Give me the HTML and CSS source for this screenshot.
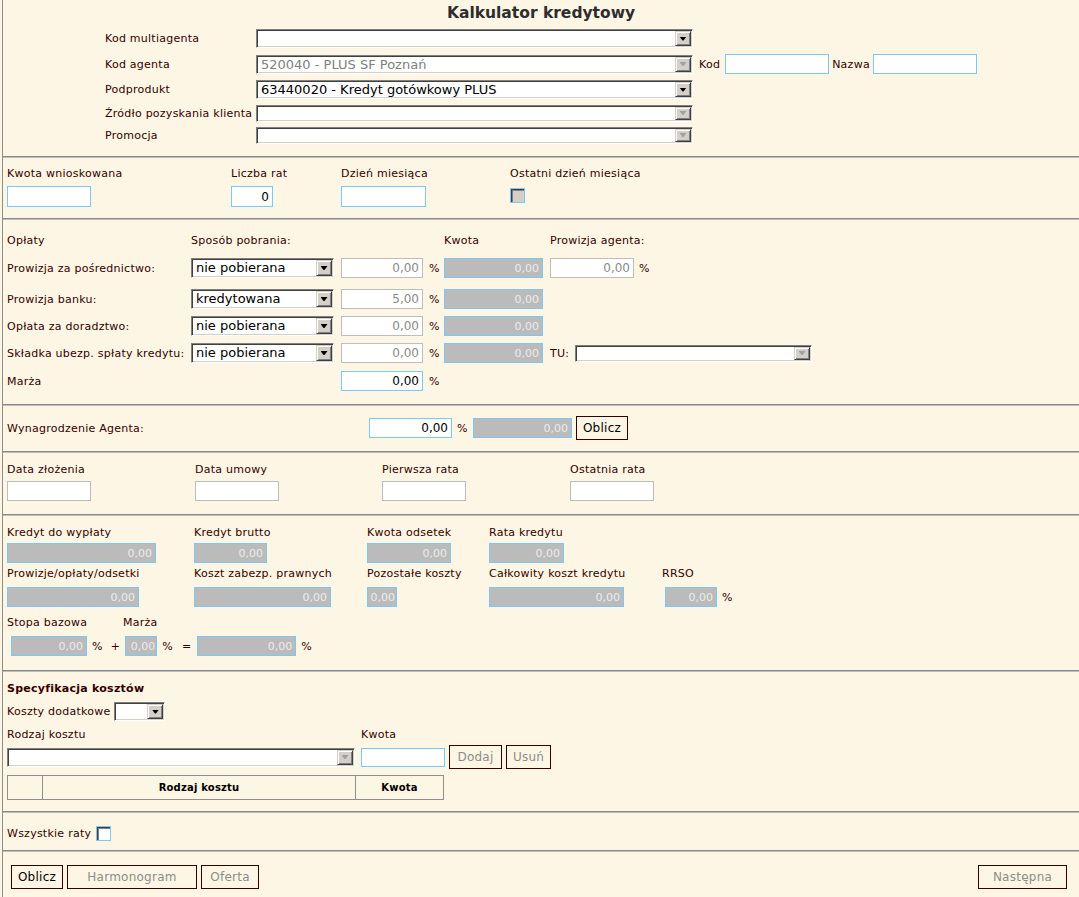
FILE: index.html
```html
<!DOCTYPE html>
<html lang="pl">
<head>
<meta charset="utf-8">
<title>Kalkulator kredytowy</title>
<link rel="stylesheet" href="styles.css">
</head>
<body>
<div class="page">

  <section class="sec sec-top">
    <h1 class="title">Kalkulator kredytowy</h1>
    <div class="trow h25">
      <span class="tlabel">Kod multiagenta</span>
      <div class="sel w437"><span class="sel-txt"></span><span class="sel-btn"></span></div>
    </div>
    <div class="trow h26">
      <span class="tlabel">Kod agenta</span>
      <div class="sel w437 off"><span class="sel-txt">520040 - PLUS SF Poznań</span><span class="sel-btn"></span></div>
      <span class="mini-label kod">Kod</span>
      <input class="in w104" type="text">
      <span class="mini-label nazwa">Nazwa</span>
      <input class="in w104" type="text">
    </div>
    <div class="trow h25">
      <span class="tlabel">Podprodukt</span>
      <div class="sel w437"><span class="sel-txt">63440020 - Kredyt gotówkowy PLUS</span><span class="sel-btn"></span></div>
    </div>
    <div class="trow h22">
      <span class="tlabel">Źródło pozyskania klienta</span>
      <div class="sel w437 small off"><span class="sel-txt"></span><span class="sel-btn"></span></div>
    </div>
    <div class="trow h22">
      <span class="tlabel">Promocja</span>
      <div class="sel w437 small off"><span class="sel-txt"></span><span class="sel-btn"></span></div>
    </div>
  </section>
  <div class="sep"></div>

  <section class="sec sec-kwota">
    <div class="grid4">
      <span class="lbl">Kwota wnioskowana</span>
      <span class="lbl">Liczba rat</span>
      <span class="lbl">Dzień miesiąca</span>
      <span class="lbl">Ostatni dzień miesiąca</span>
      <input class="in h21 w84" type="text">
      <input class="in h21 w42" type="text" value="0">
      <input class="in h21 w85" type="text">
      <span class="chk gray-chk"></span>
    </div>
  </section>
  <div class="sep"></div>

  <section class="sec sec-oplaty">
    <div class="orow head">
      <span class="c-label">Opłaty</span>
      <span class="c-sel">Sposób pobrania:</span>
      <span class="c-pct"></span>
      <span class="c-kw">Kwota</span>
      <span>Prowizja agenta:</span>
    </div>
    <div class="orow mt11">
      <span class="c-label">Prowizja za pośrednictwo:</span>
      <span class="c-sel"><div class="sel w143 h20"><span class="sel-txt">nie pobierana</span><span class="sel-btn"></span></div></span>
      <input class="in dis w82" type="text" value="0,00" readonly>
      <span class="pct">%</span>
      <span class="c-kw"><input class="in gray w99" type="text" value="0,00" readonly></span>
      <input class="in dis w84" type="text" value="0,00" readonly>
      <span class="pct2">%</span>
    </div>
    <div class="orow mt11">
      <span class="c-label">Prowizja banku:</span>
      <span class="c-sel"><div class="sel w143 h20"><span class="sel-txt">kredytowana</span><span class="sel-btn"></span></div></span>
      <input class="in dis w82" type="text" value="5,00" readonly>
      <span class="pct">%</span>
      <span class="c-kw"><input class="in gray w99" type="text" value="0,00" readonly></span>
    </div>
    <div class="orow mt7">
      <span class="c-label">Opłata za doradztwo:</span>
      <span class="c-sel"><div class="sel w143 h20"><span class="sel-txt">nie pobierana</span><span class="sel-btn"></span></div></span>
      <input class="in dis w82" type="text" value="0,00" readonly>
      <span class="pct">%</span>
      <span class="c-kw"><input class="in gray w99" type="text" value="0,00" readonly></span>
    </div>
    <div class="orow mt7">
      <span class="c-label">Składka ubezp. spłaty kredytu:</span>
      <span class="c-sel"><div class="sel w143 h20"><span class="sel-txt">nie pobierana</span><span class="sel-btn"></span></div></span>
      <input class="in dis w82" type="text" value="0,00" readonly>
      <span class="pct">%</span>
      <span class="c-kw"><input class="in gray w99" type="text" value="0,00" readonly></span>
      <span class="tu">TU:</span>
      <div class="sel w237 small off"><span class="sel-txt"></span><span class="sel-btn"></span></div>
    </div>
    <div class="orow mt8">
      <span class="c-label">Marża</span>
      <span class="c-sel"></span>
      <input class="in w82" type="text" value="0,00">
      <span class="pct">%</span>
    </div>
  </section>
  <div class="sep"></div>

  <section class="sec sec-wyn">
    <div class="wrow">
      <span class="w-label">Wynagrodzenie Agenta:</span>
      <input class="in w83" type="text" value="0,00">
      <span class="pct w-pct">%</span>
      <input class="in gray w99" type="text" value="0,00" readonly>
      <button class="btn b-oblicz2" type="button">Oblicz</button>
    </div>
  </section>
  <div class="sep"></div>

  <section class="sec sec-daty">
    <div class="dgrid">
      <span class="lbl">Data złożenia</span>
      <span class="lbl">Data umowy</span>
      <span class="lbl">Pierwsza rata</span>
      <span class="lbl">Ostatnia rata</span>
      <input class="in dis w84" type="text" readonly>
      <input class="in dis w84" type="text" readonly>
      <input class="in dis w84" type="text" readonly>
      <input class="in dis w84" type="text" readonly>
    </div>
  </section>
  <div class="sep"></div>

  <section class="sec sec-wyniki">
    <div class="rgrid">
      <span class="lbl">Kredyt do wypłaty</span>
      <span class="lbl">Kredyt brutto</span>
      <span class="lbl">Kwota odsetek</span>
      <span class="lbl">Rata kredytu</span>
      <span></span>
      <input class="in gray w149" type="text" value="0,00" readonly>
      <input class="in gray w73" type="text" value="0,00" readonly>
      <input class="in gray w84" type="text" value="0,00" readonly>
      <input class="in gray w75" type="text" value="0,00" readonly>
      <span></span>
    </div>
    <div class="rgrid r2">
      <span class="lbl">Prowizje/opłaty/odsetki</span>
      <span class="lbl">Koszt zabezp. prawnych</span>
      <span class="lbl">Pozostałe koszty</span>
      <span class="lbl">Całkowity koszt kredytu</span>
      <span class="lbl">RRSO</span>
      <input class="in gray w132" type="text" value="0,00" readonly>
      <input class="in gray w137" type="text" value="0,00" readonly>
      <input class="in gray w30 tight" type="text" value="0,00" readonly>
      <input class="in gray w135" type="text" value="0,00" readonly>
      <span class="rrso"><input class="in gray w52" type="text" value="0,00" readonly><span class="pct">%</span></span>
    </div>
    <div class="stopa-labels">
      <span class="lbl s-baza">Stopa bazowa</span>
      <span class="lbl">Marża</span>
    </div>
    <div class="stopa-row">
      <input class="in gray w76" type="text" value="0,00" readonly>
      <span class="op op-pct">%</span>
      <span class="op op-plus">+</span>
      <input class="in gray w32 tight" type="text" value="0,00" readonly>
      <span class="op op-pct">%</span>
      <span class="op op-eq">=</span>
      <input class="in gray w99" type="text" value="0,00" readonly>
      <span class="op op-pct">%</span>
    </div>
  </section>
  <div class="sep"></div>

  <section class="sec sec-spec">
    <div class="spec-title">Specyfikacja kosztów</div>
    <div class="koszty-row">
      <span class="lbl">Koszty dodatkowe</span>
      <div class="sel w51 h19"><span class="sel-txt"></span><span class="sel-btn"></span></div>
    </div>
    <div class="rk-labels">
      <span class="lbl rk-l">Rodzaj kosztu</span>
      <span class="lbl">Kwota</span>
    </div>
    <div class="rk-row">
      <div class="sel w348 h19 off"><span class="sel-txt"></span><span class="sel-btn"></span></div>
      <input class="in w84 h19" type="text">
      <button class="btn off b-dodaj" type="button">Dodaj</button>
      <button class="btn off b-usun" type="button">Usuń</button>
    </div>
    <table class="ktab">
      <thead>
        <tr><th class="k0"></th><th class="k1">Rodzaj kosztu</th><th class="k2">Kwota</th></tr>
      </thead>
    </table>
  </section>
  <div class="sep"></div>

  <section class="sec sec-raty">
    <div class="raty-row">
      <span class="lbl">Wszystkie raty</span>
      <span class="chk white-chk"></span>
    </div>
  </section>
  <div class="sep"></div>

  <section class="sec sec-btns">
    <div class="btn-row">
      <button class="btn b-oblicz" type="button">Oblicz</button>
      <button class="btn off b-harm" type="button">Harmonogram</button>
      <button class="btn off b-oferta" type="button">Oferta</button>
      <span class="spacer"></span>
      <button class="btn off b-nast" type="button">Następna</button>
    </div>
  </section>
</div>
</body>
</html>
```
FILE: styles.css
```css
* { box-sizing: border-box; }
html, body { margin: 0; padding: 0; background: #fdf6e4; }
body {
  font-family: "DejaVu Sans", Verdana, sans-serif;
  font-size: 11px;
  letter-spacing: 0.25px;
  color: #330000;
}
.page {
  margin-left: 2px;
  border-left: 1px solid #8c8c8c;
  min-height: 897px;
}
.sec { padding-left: 4px; }
.sep {
  height: 2px;
  border-top: 1px solid #8a8a8a;
  border-bottom: 1px solid #bdbdbd;
}
.lbl { line-height: 14px; height: 14px; white-space: nowrap; }

/* ---------- buttons (base) ---------- */
.btn {
  height: 24px;
  margin: 0;
  padding: 0;
  border: 1px solid #330000;
  background: transparent;
  font-family: "DejaVu Sans", Verdana, sans-serif;
  font-size: 12px;
  letter-spacing: 0.25px;
  color: #000;
  flex: none;
}
.btn.off { color: #8c8c8c; }

/* ---------- top ---------- */
.title {
  margin: 0;
  height: 26px;
  line-height: 27px;
  text-align: center;
  font-size: 15.5px;
  letter-spacing: 0;
  font-weight: bold;
  color: #2d2d2d;
  padding-right: 4px;
}
.sec-top { padding-bottom: 10px; }
.trow { display: flex; align-items: center; padding-left: 98px; }
.h25 { height: 25px; }
.h26 { height: 26px; }
.h22 { height: 22px; }
.tlabel { width: 151px; white-space: nowrap; }
.mini-label.kod { margin-left: 6px; margin-right: 5px; }
.mini-label.nazwa { margin-left: 3px; margin-right: 3px; }

/* ---------- fake select ---------- */
.sel {
  display: flex;
  height: 19px;
  background: #fff;
  border: 1px solid;
  border-color: #808080 #fff #fff #808080;
  padding: 1px;
  box-shadow: inset 1px 1px #404040, inset -1px -1px #d4d0c8;
  flex: none;
}
.sel.small { height: 17px; }
.sel.h20 { height: 20px; }
.sel.h19 { height: 19px; }
.sel-txt {
  flex: 1;
  font-size: 13px;
  line-height: 16px;
  letter-spacing: 0;
  padding-left: 3px;
  color: #000;
  white-space: nowrap;
  overflow: hidden;
}
.sel.off .sel-txt { color: #808080; }
.sel-btn {
  width: 16px;
  flex: none;
  background: #d4d0c8;
  border: 1px solid;
  border-color: #d4d0c8 #404040 #404040 #d4d0c8;
  box-shadow: inset 1px 1px #fff, inset -1px -1px #808080;
  display: flex;
  align-items: center;
  justify-content: center;
}
.sel-btn::after {
  content: "";
  width: 7px;
  height: 4px;
  background: #000;
  clip-path: polygon(0 0, 7px 0, 4px 4px, 3px 4px);
}
.sel.off .sel-btn::after { background: #a0a0a0; }

.w437 { width: 437px; }
.w143 { width: 143px; }
.w237 { width: 237px; }
.w348 { width: 348px; }
.w51 { width: 51px; }

/* ---------- inputs ---------- */
.in {
  height: 20px;
  margin: 0;
  padding: 0 3px;
  border: 1px solid #79c8f5;
  background: #fff;
  font-family: "DejaVu Sans", Verdana, sans-serif;
  font-size: 12px;
  color: #000;
  text-align: right;
  outline: none;
  flex: none;
}
.in.h21 { height: 21px; }
.in.h19 { height: 19px; }
.in.dis { border-color: #bdbdbd; color: #8a8a8a; }
.in.gray { background: #bbbbbb; color: #ececec; font-size: 11px; }
.in.tight { padding: 0 1px; }
.w30 { width: 30px; }
.w32 { width: 32px; }
.w42 { width: 42px; }
.w52 { width: 52px; }
.w73 { width: 73px; }
.w75 { width: 75px; }
.w76 { width: 76px; }
.w82 { width: 82px; }
.w83 { width: 83px; }
.w84 { width: 84px; }
.w85 { width: 85px; }
.w99 { width: 99px; }
.w104 { width: 104px; }
.w132 { width: 132px; }
.w135 { width: 135px; }
.w137 { width: 137px; }
.w149 { width: 149px; }

/* ---------- checkbox ---------- */
.chk {
  display: block;
  width: 15px;
  height: 15px;
  border: 1px solid #79c8f5;
  box-shadow: inset 1px 1px #404040, inset 2px 2px #808080;
}
.gray-chk { background: #d4d0c8; margin-top: 2px; }
.white-chk { background: #fff; }

/* ---------- kwota section ---------- */
.sec-kwota { padding-top: 9px; padding-bottom: 11px; }
.grid4 {
  display: grid;
  grid-template-columns: 224px 110px 169px auto;
  grid-template-rows: 14px 21px;
  row-gap: 5px;
  justify-items: start;
  align-items: start;
}

/* ---------- oplaty ---------- */
.sec-oplaty { padding-top: 13px; padding-bottom: 13px; }
.orow { display: flex; align-items: center; height: 20px; white-space: nowrap; }
.orow.head { height: 14px; }
.mt11 { margin-top: 11px; }
.mt7 { margin-top: 7px; }
.mt8 { margin-top: 8px; }
.c-label { width: 184px; flex: none; }
.c-sel { width: 150px; flex: none; }
.c-pct { width: 103px; flex: none; }
.c-kw { width: 106px; flex: none; display: flex; }
.pct { width: 21px; padding-left: 6px; flex: none; }
.pct2 { padding-left: 5px; }
.tu { width: 25px; flex: none; }

/* ---------- wynagrodzenie ---------- */
.sec-wyn { padding-top: 10px; padding-bottom: 11px; }
.wrow { display: flex; align-items: center; height: 24px; }
.w-label { width: 362px; flex: none; }
.w-pct { padding-left: 5px; }
.wrow .b-oblicz2 { margin-left: 4px; width: 52px; }

/* ---------- daty ---------- */
.sec-daty { padding-top: 10px; padding-bottom: 13px; }
.dgrid {
  display: grid;
  grid-template-columns: 188px 187px 188px auto;
  grid-template-rows: 14px 20px;
  row-gap: 4px;
}

/* ---------- wyniki ---------- */
.sec-wyniki { padding-top: 10px; padding-bottom: 14px; }
.rgrid {
  display: grid;
  grid-template-columns: 187px 173px 122px 173px auto;
  grid-template-rows: 14px 20px;
  row-gap: 3px;
  justify-items: start;
}
.rgrid.r2 { margin-top: 4px; row-gap: 6px; }
.rrso { display: flex; align-items: center; padding-left: 3px; }
.rrso .pct { padding-left: 5px; }
.stopa-labels { display: flex; margin-top: 9px; height: 14px; line-height: 14px; }
.s-baza { width: 116px; }
.stopa-row { display: flex; align-items: center; margin-top: 6px; padding-left: 4px; height: 20px; }
.op { flex: none; }
.op-pct { padding-left: 5px; }
.op-plus { padding-left: 8px; padding-right: 5px; }
.op-eq { padding-left: 9px; padding-right: 6px; }

/* ---------- specyfikacja ---------- */
.sec-spec { padding-top: 10px; padding-bottom: 11px; }
.spec-title { font-weight: bold; height: 14px; line-height: 14px; color: #330000; }
.koszty-row { display: flex; align-items: center; height: 19px; margin-top: 6px; }
.koszty-row .lbl { margin-right: 4px; }
.rk-labels { display: flex; height: 14px; margin-top: 7px; }
.rk-l { width: 354px; }
.rk-row { display: flex; align-items: center; height: 24px; margin-top: 3px; }
.rk-row .in { margin-left: 6px; }
.rk-row .b-dodaj { margin-left: 4px; width: 53px; }
.rk-row .b-usun { margin-left: 4px; width: 45px; }
.ktab {
  margin-top: 6px;
  border-collapse: collapse;
  font-size: 10px;
  letter-spacing: 0.2px;
}
.ktab th {
  border: 1px solid #8f8f8f;
  height: 24px;
  padding: 0;
  color: #000;
  font-weight: bold;
}
.k0 { width: 35px; }
.k1 { width: 313px; }
.k2 { width: 88px; }

/* ---------- raty ---------- */
.sec-raty { padding-top: 13px; padding-bottom: 9px; }
.raty-row { display: flex; align-items: center; height: 15px; }
.raty-row .lbl { margin-right: 5px; }

/* ---------- bottom buttons ---------- */
.sec-btns { padding-top: 13px; padding-left: 8px; padding-right: 12px; }
.btn-row { display: flex; align-items: center; gap: 4px; }
.spacer { flex: 1; }
.b-oblicz { width: 52px; }
.b-harm { width: 130px; }
.b-oferta { width: 58px; }
.b-nast { width: 89px; }
```
